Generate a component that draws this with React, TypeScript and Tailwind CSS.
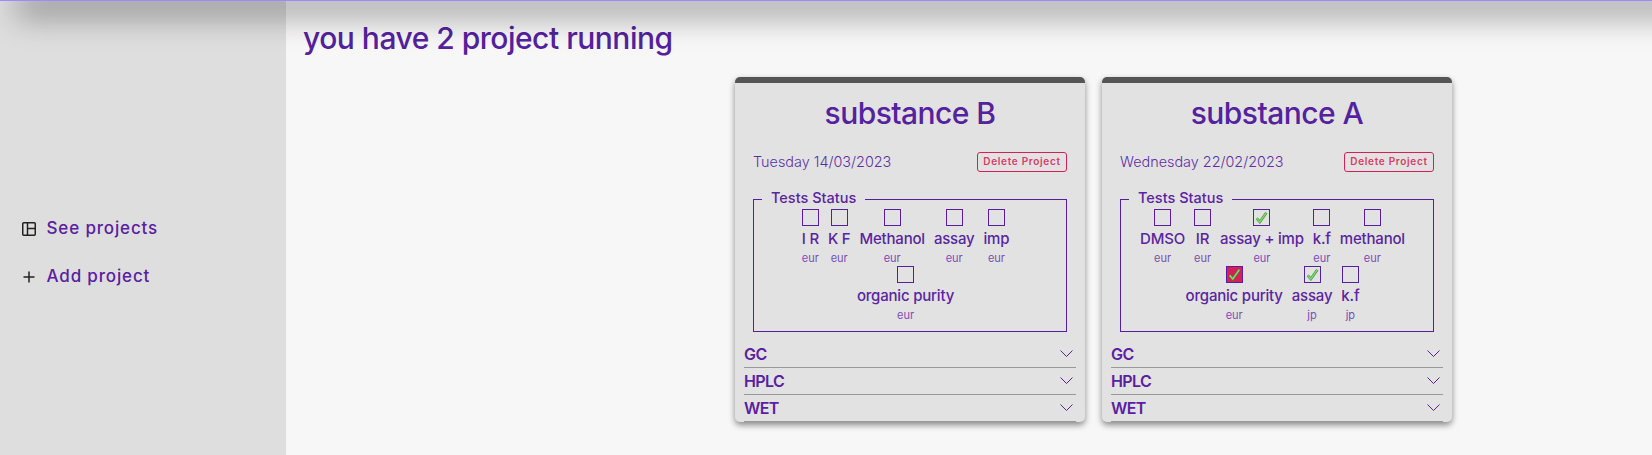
type Test = {
  name: string
  region: string
  status?: "done" | "failed"
}

type Project = {
  title: string
  date: string
  rows: Test[][]
}

const projects: Project[] = [
  {
    title: "substance B",
    date: "Tuesday 14/03/2023",
    rows: [
      [
        { name: "I R", region: "eur" },
        { name: "K F", region: "eur" },
        { name: "Methanol", region: "eur" },
        { name: "assay", region: "eur" },
        { name: "imp", region: "eur" },
      ],
      [{ name: "organic purity", region: "eur" }],
    ],
  },
  {
    title: "substance A",
    date: "Wednesday 22/02/2023",
    rows: [
      [
        { name: "DMSO", region: "eur" },
        { name: "IR", region: "eur" },
        { name: "assay + imp", region: "eur", status: "done" },
        { name: "k.f", region: "eur" },
        { name: "methanol", region: "eur" },
      ],
      [
        { name: "organic purity", region: "eur", status: "failed" },
        { name: "assay", region: "jp", status: "done" },
        { name: "k.f", region: "jp" },
      ],
    ],
  },
]

function Check() {
  return (
    <svg viewBox="0 0 17 17" className="h-[15px] w-[15px]">
      <path d="M3 9.5 L6.6 13.5 L14 3" fill="none" stroke="#4f7a45" strokeWidth="3" />
      <path d="M3 9.5 L6.6 13.5 L14 3" fill="none" stroke="#6fe35f" strokeWidth="1.8" />
    </svg>
  )
}

function TestItem({ test }: { test: Test }) {
  return (
    <div className="mr-[9px] flex flex-col items-center">
      <div
        className={
          "flex h-[17px] w-[17px] items-center justify-center border border-[#551fa0] " +
          (test.status === "failed" ? "bg-[#d81f55]" : "")
        }
      >
        {test.status && <Check />}
      </div>
      <span className="mt-[2px] text-[15px] leading-[22px] font-[550] tracking-[-0.2px] text-[#5a25a0]">
        {test.name}
      </span>
      <span className="text-[11px] leading-[16px] text-[#7a4db5]">{test.region}</span>
    </div>
  )
}

function Accordion({ label }: { label: string }) {
  return (
    <div className="flex h-[27px] items-center justify-between border-b border-[#999] pr-[3.5px]">
      <span className="text-[16px] font-semibold tracking-[-0.6px] text-[#5a209f]">{label}</span>
      <svg viewBox="0 0 13 7" className="h-[7px] w-[13px]" fill="none" stroke="#5a209f" strokeWidth="1">
        <path d="M0.5 0.5 L6.5 6.5 L12.5 0.5" />
      </svg>
    </div>
  )
}

function ProjectCard({ project }: { project: Project }) {
  return (
    <div className="h-[345px] w-[350px] rounded-[5px] border-t-[6px] border-[#555] bg-[#e2e2e2] shadow-[0_3px_6px_rgba(0,0,0,0.45)]">
      <h2 className="mt-[9px] text-center text-[30px] leading-[42px] font-[550] tracking-[-0.55px] text-[#55219d]">
        {project.title}
      </h2>
      <div className="mt-[17px] flex items-center justify-between px-[18px]">
        <span className="text-[14.4px] font-light text-[#5f2ea6]">{project.date}</span>
        <button className="h-[20px] w-[90px] rounded-[3px] border border-[#d81f55] text-[10px] font-semibold tracking-[0.7px] text-[#d93a66]">
          Delete Project
        </button>
      </div>
      <fieldset className="mx-[18px] mt-[18px] h-[141px] border border-[#551fa0] px-[8px]">
        <legend className="px-[9px] pb-[4px] text-[14.5px] leading-[14px] font-medium text-[#5a25a0]">
          Tests Status
        </legend>
        {project.rows.map((row, i) => (
          <div key={i} className="flex justify-center">
            {row.map((test) => (
              <TestItem key={test.name + test.region} test={test} />
            ))}
          </div>
        ))}
      </fieldset>
      <div className="mx-[9px] mt-[9px]">
        <Accordion label="GC" />
        <Accordion label="HPLC" />
        <Accordion label="WET" />
      </div>
    </div>
  )
}

export default function App() {
  return (
    <div className="relative flex h-[455px] overflow-hidden bg-[#f7f7f7] font-['Inter',sans-serif]">
      <div className="absolute top-0 right-0 left-0 h-[1px] bg-[#9b8bff] shadow-[26px_4px_32px_10px_rgba(0,0,0,0.42)]" />
      <aside className="flex w-[286px] shrink-0 flex-col gap-[24px] bg-[#dedede] pt-[217px] pl-[22px]">
        <a className="flex h-[24px] items-center gap-[10.5px] text-[17px] font-[550] tracking-[0.85px] text-[#5a209f]">
          <svg viewBox="0 0 14 14" className="h-[14px] w-[14px]" fill="none" stroke="#222" strokeWidth="1.5">
            <rect x="0.75" y="0.75" width="12.5" height="12.5" rx="1" />
            <path d="M5.5 0.75 V13.25 M5.5 6.5 H13.25" />
          </svg>
          See projects
        </a>
        <a className="flex h-[24px] items-center gap-[10.5px] text-[17px] font-[550] tracking-[0.85px] text-[#5a209f]">
          <svg viewBox="0 0 14 14" className="h-[14px] w-[14px]" fill="none" stroke="#222" strokeWidth="1.5">
            <path d="M1.5 7 H12.5 M7 1.5 V12.5" />
          </svg>
          Add project
        </a>
      </aside>
      <main className="flex flex-1 flex-col pt-[16px]">
        <h1 className="pl-[17px] text-[30px] leading-[44px] font-[550] tracking-[-0.5px] text-[#55219d]">
          you have 2 project running
        </h1>
        <div className="flex justify-end gap-[17px] pt-[17px] pr-[200px]">
          {projects.map((project) => (
            <ProjectCard key={project.title} project={project} />
          ))}
        </div>
      </main>
    </div>
  )
}
